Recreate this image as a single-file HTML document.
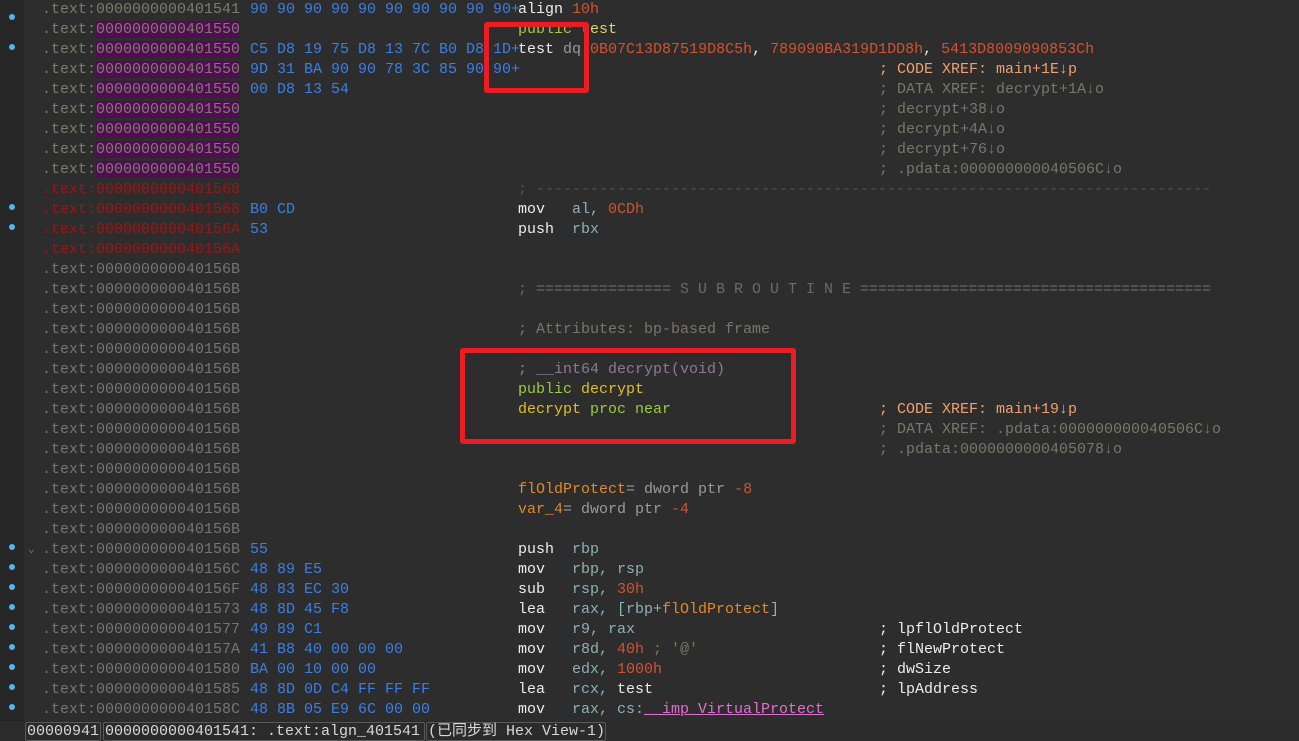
<!DOCTYPE html>
<html><head><meta charset="utf-8"><style>
html,body{margin:0;padding:0;}
body{width:1299px;height:741px;overflow:hidden;background:#2b2b2b;position:relative;font-family:"Liberation Mono","Noto Sans CJK SC",monospace;font-size:15px;}
#gut{position:absolute;left:0;top:0;width:24px;height:721px;background:#262626;}
#main{position:absolute;left:24px;top:0;width:1275px;height:721px;background:#2d2d2d;overflow:hidden;}
.r{position:absolute;left:0;height:20px;line-height:20px;white-space:pre;width:1275px;}
.r span{white-space:pre;}
.a{position:absolute;left:18px;color:#7c7c6c;}
.a.g{color:#757575;}
.a.rd{color:#a01414;}
.pp{background:#520d52;}
.b{position:absolute;left:226px;color:#3a7fe6;}
.m{position:absolute;left:494px;color:#ececec;}
.o{position:absolute;left:548px;color:#8fb1b1;}
.c{position:absolute;left:855px;color:#77776a;}
.num{color:#d2532e;}
.wt{color:#ececec;}
.gr{color:#9acd32;}
.yl{color:#e6d36a;}
.cx{color:#f0a070;}
.dy{color:#e0c020;}
.or{color:#e08a28;}
.gy{color:#9a9a9a;}
.pu{color:#8a7a98;}
.sep{color:#555;}
.dot{position:absolute;left:9px;width:6px;height:6px;border-radius:3px;background:#4fb6f0;}
.box{position:absolute;border:5px solid #ea1c24;border-radius:3px;}
#st{position:absolute;left:0;top:721px;width:1299px;height:20px;background:#2b2b2b;font-size:15px;}
.sb{position:absolute;top:1px;height:17px;line-height:17px;border:1px solid #5a5a5a;border-radius:2px;color:#d8d8d8;padding:0 1px;white-space:pre;}
</style></head><body>
<div id="gut"></div>
<div class="dot" style="top:14px"></div>
<div class="dot" style="top:44px"></div>
<div class="dot" style="top:204px"></div>
<div class="dot" style="top:224px"></div>
<div class="dot" style="top:544px"></div>
<div class="dot" style="top:564px"></div>
<div class="dot" style="top:584px"></div>
<div class="dot" style="top:604px"></div>
<div class="dot" style="top:624px"></div>
<div class="dot" style="top:644px"></div>
<div class="dot" style="top:664px"></div>
<div class="dot" style="top:684px"></div>
<div class="dot" style="top:704px"></div>
<div id="main">
<div class="r" style="top:0"><span class="a">.text:0000000000401541</span><span class="b">90 90 90 90 90 90 90 90 90 90+</span><span class="m">align <span class="num">10h</span></span></div>
<div class="r" style="top:20px"><span class="a">.text:<span class="pp">0000000000401550</span></span><span class="m"><span class="gr">public</span> <span class="yl">test</span></span></div>
<div class="r" style="top:40px"><span class="a">.text:<span class="pp">0000000000401550</span></span><span class="b">C5 D8 19 75 D8 13 7C B0 D8 1D+</span><span class="m">test <span class="gy">dq</span> <span class="num">0B07C13D87519D8C5h</span>, <span class="num">789090BA319D1DD8h</span>, <span class="num">5413D8009090853Ch</span></span></div>
<div class="r" style="top:60px"><span class="a">.text:<span class="pp">0000000000401550</span></span><span class="b">9D 31 BA 90 90 78 3C 85 90 90+</span><span class="c"><span class="cx">; CODE XREF: main+1E↓p</span></span></div>
<div class="r" style="top:80px"><span class="a">.text:<span class="pp">0000000000401550</span></span><span class="b">00 D8 13 54</span><span class="c">; DATA XREF: decrypt+1A↓o</span></div>
<div class="r" style="top:100px"><span class="a">.text:<span class="pp">0000000000401550</span></span><span class="c">; decrypt+38↓o</span></div>
<div class="r" style="top:120px"><span class="a">.text:<span class="pp">0000000000401550</span></span><span class="c">; decrypt+4A↓o</span></div>
<div class="r" style="top:140px"><span class="a">.text:<span class="pp">0000000000401550</span></span><span class="c">; decrypt+76↓o</span></div>
<div class="r" style="top:160px"><span class="a">.text:<span class="pp">0000000000401550</span></span><span class="c">; .pdata:000000000040506C↓o</span></div>
<div class="r" style="top:180px"><span class="a rd">.text:0000000000401568</span><span class="m sep">; ---------------------------------------------------------------------------</span></div>
<div class="r" style="top:200px"><span class="a rd">.text:0000000000401568</span><span class="b">B0 CD</span><span class="m">mov</span><span class="o">al, <span class="num">0CDh</span></span></div>
<div class="r" style="top:220px"><span class="a rd">.text:000000000040156A</span><span class="b">53</span><span class="m">push</span><span class="o">rbx</span></div>
<div class="r" style="top:240px"><span class="a rd">.text:000000000040156A</span></div>
<div class="r" style="top:260px"><span class="a g">.text:000000000040156B</span></div>
<div class="r" style="top:280px"><span class="a g">.text:000000000040156B</span></div>
<div class="r" style="top:280px"><span class="m" style="color:#6a6a6a">; =============== S U B R O U T I N E =======================================</span></div>
<div class="r" style="top:300px"><span class="a g">.text:000000000040156B</span></div>
<div class="r" style="top:320px"><span class="a g">.text:000000000040156B</span><span class="m" style="color:#77776a">; Attributes: bp-based frame</span></div>
<div class="r" style="top:340px"><span class="a g">.text:000000000040156B</span></div>
<div class="r" style="top:360px"><span class="a g">.text:000000000040156B</span><span class="m pu">; __int64 decrypt(void)</span></div>
<div class="r" style="top:380px"><span class="a g">.text:000000000040156B</span><span class="m"><span class="gr">public</span> <span class="dy">decrypt</span></span></div>
<div class="r" style="top:400px"><span class="a g">.text:000000000040156B</span><span class="m"><span class="dy">decrypt</span> <span class="gr">proc near</span></span><span class="c"><span class="cx">; CODE XREF: main+19↓p</span></span></div>
<div class="r" style="top:420px"><span class="a g">.text:000000000040156B</span><span class="c">; DATA XREF: .pdata:000000000040506C↓o</span></div>
<div class="r" style="top:440px"><span class="a g">.text:000000000040156B</span><span class="c">; .pdata:0000000000405078↓o</span></div>
<div class="r" style="top:460px"><span class="a g">.text:000000000040156B</span></div>
<div class="r" style="top:480px"><span class="a g">.text:000000000040156B</span><span class="m"><span class="or">flOldProtect</span><span class="gy">= dword ptr </span><span class="num">-8</span></span></div>
<div class="r" style="top:500px"><span class="a g">.text:000000000040156B</span><span class="m"><span class="or">var_4</span><span class="gy">= dword ptr </span><span class="num">-4</span></span></div>
<div class="r" style="top:520px"><span class="a g">.text:000000000040156B</span></div>
<div class="r" style="top:540px"><span style="position:absolute;left:4px;color:#777;font-size:11px">&#8964;</span><span class="a g">.text:000000000040156B</span><span class="b">55</span><span class="m">push</span><span class="o">rbp</span></div>
<div class="r" style="top:560px"><span class="a g">.text:000000000040156C</span><span class="b">48 89 E5</span><span class="m">mov</span><span class="o">rbp, rsp</span></div>
<div class="r" style="top:580px"><span class="a g">.text:000000000040156F</span><span class="b">48 83 EC 30</span><span class="m">sub</span><span class="o">rsp, <span class="num">30h</span></span></div>
<div class="r" style="top:600px"><span class="a g">.text:0000000000401573</span><span class="b">48 8D 45 F8</span><span class="m">lea</span><span class="o">rax, [rbp+<span class="or">flOldProtect</span>]</span></div>
<div class="r" style="top:620px"><span class="a g">.text:0000000000401577</span><span class="b">49 89 C1</span><span class="m">mov</span><span class="o">r9, rax</span><span class="c"><span class="wt">; lpflOldProtect</span></span></div>
<div class="r" style="top:640px"><span class="a g">.text:000000000040157A</span><span class="b">41 B8 40 00 00 00</span><span class="m">mov</span><span class="o">r8d, <span class="num">40h</span> <span style="color:#77776a">; '@'</span></span><span class="c"><span class="wt">; flNewProtect</span></span></div>
<div class="r" style="top:660px"><span class="a g">.text:0000000000401580</span><span class="b">BA 00 10 00 00</span><span class="m">mov</span><span class="o">edx, <span class="num">1000h</span></span><span class="c"><span class="wt">; dwSize</span></span></div>
<div class="r" style="top:680px"><span class="a g">.text:0000000000401585</span><span class="b">48 8D 0D C4 FF FF FF</span><span class="m">lea</span><span class="o">rcx, <span class="wt">test</span></span><span class="c"><span class="wt">; lpAddress</span></span></div>
<div class="r" style="top:700px"><span class="a g">.text:000000000040158C</span><span class="b">48 8B 05 E9 6C 00 00</span><span class="m">mov</span><span class="o">rax, cs:<span style="color:#e070d0;text-decoration:underline">__imp_VirtualProtect</span></span></div>
</div>
<div class="box" style="left:484px;top:22px;width:95px;height:61px"></div>
<div class="box" style="left:460px;top:348px;width:326px;height:86px"></div>
<div id="st">
<div class="sb" style="left:25px;width:72px">00000941</div>
<div class="sb" style="left:103px;width:318px">0000000000401541: .text:algn_401541</div>
<div class="sb" style="left:426px;width:176px">(已同步到 Hex View-1)</div>
</div>
</body></html>
